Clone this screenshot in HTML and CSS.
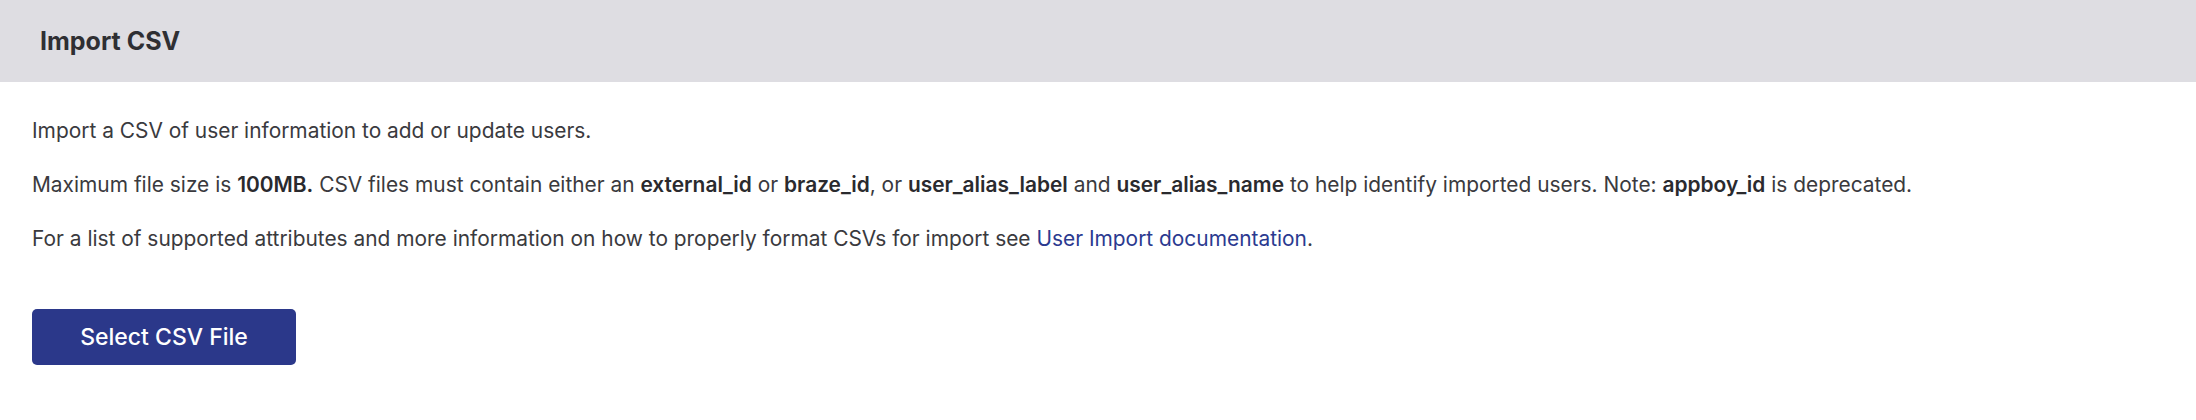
FILE: index.html
```html
<!DOCTYPE html>
<html lang="en">
<head>
<meta charset="utf-8">
<title>Import CSV</title>
<link rel="stylesheet" href="styles.css">
</head>
<body>
<section class="panel">
  <header class="panel-header">
    <h2 class="panel-title">Import CSV</h2>
  </header>
  <div class="panel-body">
    <p class="text">Import a CSV of user information to add or update users.</p>
    <p class="text">Maximum file size is <b>100MB.</b> CSV files must contain either an <b>external_id</b> or <b>braze_id</b>, or <b>user_alias_label</b> and <b>user_alias_name</b> to help identify imported users. Note: <b>appboy_id</b> is deprecated.</p>
    <p class="text">For a list of supported attributes and more information on how to properly format CSVs for import see <a class="link" href="#">User Import documentation</a>.</p>
    <div class="actions">
      <button class="btn-primary" type="button">Select CSV File</button>
    </div>
  </div>
</section>
</body>
</html>
```
FILE: styles.css
```css
html, body {
  margin: 0;
  padding: 0;
  background: #ffffff;
}
body {
  font-family: Inter, "Noto Sans", sans-serif;
  color: #3a3a3e;
}
.panel {
  width: 100%;
}
.panel-header {
  background: #dedde2;
  height: 82px;
  display: flex;
  align-items: center;
  padding: 0 40px;
  box-sizing: border-box;
}
.panel-title {
  margin: 0;
  font-size: 25px;
  font-weight: 700;
  color: #2f2f33;
}
.panel-body {
  padding: 35px 32px 0;
  display: flex;
  flex-direction: column;
  gap: 26px;
}
.text {
  margin: 0;
  font-size: 20.9px;
  line-height: 28px;
}
.text b {
  font-weight: 600;
  color: #2a2a2e;
}
.link {
  color: #2b3a90;
  text-decoration: none;
}
.actions {
  padding-top: 30px;
}
.btn-primary {
  width: 264px;
  height: 56px;
  border: none;
  border-radius: 5px;
  background: #2b388a;
  color: #ffffff;
  font-family: Inter, "Noto Sans", sans-serif;
  font-size: 23px;
  font-weight: 500;
  cursor: pointer;
}
```
